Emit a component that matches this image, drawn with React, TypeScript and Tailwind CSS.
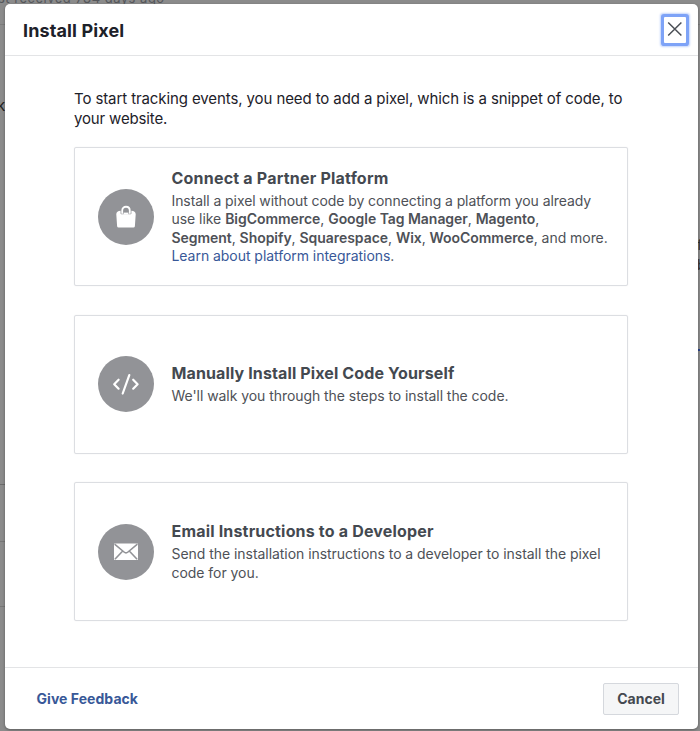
import type { ReactNode } from "react";

function CircleIcon({ children }: { children: ReactNode }) {
  return (
    <div className="flex h-[56px] w-[56px] shrink-0 items-center justify-center rounded-full bg-[#929397]">
      {children}
    </div>
  );
}

function BagIcon() {
  return (
    <svg width="22" height="24" viewBox="0 0 22 24" fill="none">
      <path d="M1.3 9.3C1.3 6.8 3 6 5.6 5.8V8.4Q5.6 9.2 6.4 9.2H15.6Q16.4 9.2 16.4 8.4V5.8C19 6 20.7 6.8 20.7 9.3L19.9 21.3Q19.7 22.5 18.4 22.5H3.6Q2.3 22.5 2.1 21.3Z" fill="white" />
      <path d="M7.2 8.8V5.8C7.2 0.4 14.8 0.4 14.8 5.8V8.8" stroke="white" strokeWidth="1.8" />
      <path d="M8.6 7.6H13.4V9.6H8.6Z" fill="white" />
    </svg>
  );
}

function CodeIcon() {
  return (
    <svg width="28" height="24" viewBox="0 0 28 24" fill="none" stroke="white" strokeWidth="2.2" strokeLinecap="round" strokeLinejoin="round">
      <path d="M6.6 7.7L2.2 12.2L6.6 16.7M21.2 7.7L25.6 12.2L21.2 16.7M17.3 3.1L10.7 21.5" />
    </svg>
  );
}

function MailIcon() {
  return (
    <svg width="24" height="18" viewBox="0 0 24 18" fill="none">
      <rect y="0.5" width="24" height="16.5" rx="0.7" fill="white" />
      <path d="M0.6 1.2L10 9Q12 10.8 14 9L23.4 1.2M0.9 16.2L8.5 8.2M23.1 16.2L15.5 8.2" stroke="#929397" strokeWidth="1.6" />
    </svg>
  );
}

function Card({ icon, title, children }: { icon: ReactNode; title: ReactNode; children: ReactNode }) {
  return (
    <div className="flex h-[139px] items-center rounded-[2px] border border-[#dcdee2] pl-[23px] shadow-[0_0_1px_#dcdee2]">
      <CircleIcon>{icon}</CircleIcon>
      <div className="-mt-[0.75px] ml-[17.5px] whitespace-nowrap text-[14px] leading-[18.5px] tracking-[-0.045px] text-[#4e5157]">
        <h2 className="mb-[3px] text-[16px] font-bold leading-[22px] text-[#444950]">{title}</h2>
        {children}
      </div>
    </div>
  );
}

export default function App() {
  return (
    <div className="relative h-[731px] w-[700px] overflow-hidden bg-[#8b8b8b] font-['Inter','Liberation_Sans',sans-serif]">
      <div className="absolute -left-[2px] -top-[10px] whitespace-nowrap text-[13px] leading-[16px] tracking-[0.5px] text-[#55575b]">st received 784 days ago</div>
      <div className="absolute left-0 top-[24px] h-px w-full bg-[#7c7c7c]" />
      <div className="absolute -left-[3px] top-[97px] text-[15px] leading-[18px] text-[#222]">k</div>
      <div className="absolute left-0 top-[484px] h-px w-[5px] bg-[#6c6c6c]" />
      <div className="absolute left-0 top-[541px] h-px w-[5px] bg-[#777]" />
      <div className="absolute left-0 top-[606px] h-px w-[5px] bg-[#777]" />
      <div className="absolute left-[697px] top-[235px] text-[14px] leading-[20px] text-[#333]">f<br />b</div>
      <div className="absolute left-[697px] top-[349px] h-[2px] w-[3px] bg-[#27408b]" />

      <main className="relative ml-[5px] mt-[4px] flex h-[725px] w-[693px] flex-col rounded-[5px] bg-white shadow-[0_1px_3px_rgba(0,0,0,0.35)]">
        <header className="flex h-[52px] shrink-0 items-center justify-between border-b border-[#e3e4e6] pl-[18px] pr-[12px]">
          <h1 className="mt-[2px] text-[18px] font-bold leading-[24px] tracking-[0.12px] text-[#1d2129]">Install Pixel</h1>
          <button aria-label="Close" className="flex h-[26px] w-[22px] items-center justify-center rounded-[1px] bg-white pb-[2px] shadow-[0_0_0_3px_#7ea3f7,0_0_2px_4px_#c3d4fb]">
            <svg className="shrink-0" width="16" height="16" viewBox="0 0 16 16" fill="none" stroke="#4b4f56" strokeWidth="1.5"><path d="M1.2 1.5L14.4 14.5M14.4 1.5L1.2 14.5" /></svg>
          </button>
        </header>
        <section className="grow px-[69px] pt-[33px]">
          <p className="whitespace-nowrap text-[15px] leading-[19.5px] text-[#1d2129]">
            <span className="tracking-[-0.1px]">To start tracking events, you need to add a pixel, which is a snippet of code, to</span><br />
            <span className="tracking-[-0.15px]">your website.</span>
          </p>
          <div className="mt-[19px] flex w-[554px] flex-col gap-[28.5px]">
            <Card icon={<BagIcon />} title={<span className="tracking-[0.21px]">Connect a Partner Platform</span>}>
              <p>
                <span className="tracking-[-0.085px]">Install a pixel without code by connecting a platform you already</span><br />
                <span>use like <b className="font-semibold">BigCommerce</b>, <b className="font-semibold">Google Tag Manager</b>, <b className="font-semibold">Magento</b>,</span><br />
                <span><b className="font-semibold">Segment</b>, <b className="font-semibold">Shopify</b>, <b className="font-semibold">Squarespace</b>, <b className="font-semibold">Wix</b>, <b className="font-semibold">WooCommerce</b>, and more.</span><br />
                <span><a className="text-[#385898]">Learn about platform integrations</a>.</span>
              </p>
            </Card>
            <Card icon={<CodeIcon />} title={<span className="tracking-[0.12px]">Manually Install Pixel Code Yourself</span>}>
              <p className="tracking-[-0.055px]">We'll walk you through the steps to install the code.</p>
            </Card>
            <Card icon={<MailIcon />} title={<span className="tracking-[0.18px]">Email Instructions to a Developer</span>}>
              <p>
                <span>Send the installation instructions to a developer to install the pixel</span><br />
                <span>code for you.</span>
              </p>
            </Card>
          </div>
        </section>
        <footer className="flex h-[62px] shrink-0 items-center justify-between border-t border-[#e3e4e6] pl-[31.5px] pr-[19px] text-[14px] font-bold">
          <a className="tracking-[0.05px] text-[#385898]">Give Feedback</a>
          <button className="h-[32px] w-[76px] rounded-[2px] border border-[#d5d8dd] bg-[#f5f6f7] text-[#444950]">Cancel</button>
        </footer>
      </main>
    </div>
  );
}
